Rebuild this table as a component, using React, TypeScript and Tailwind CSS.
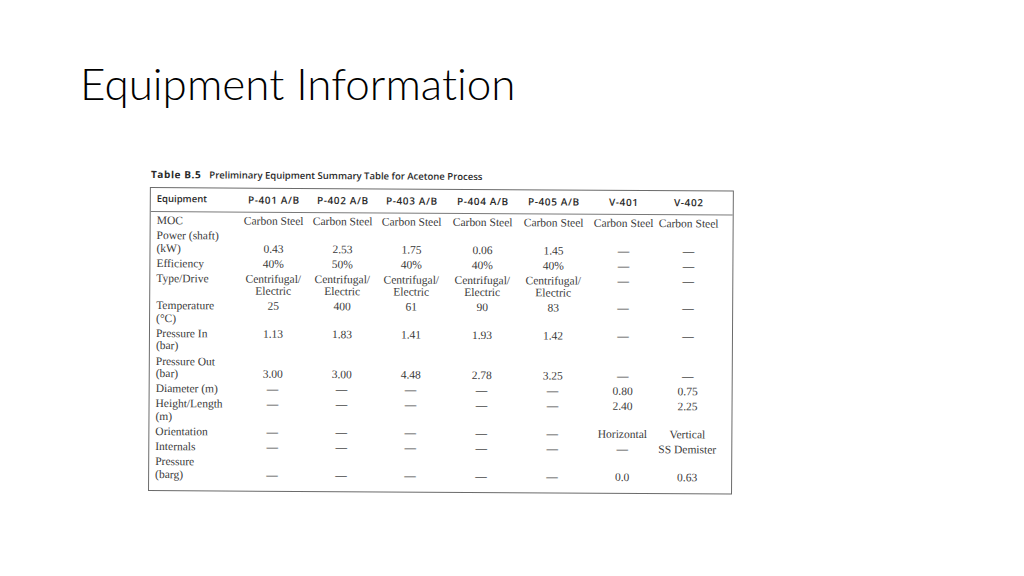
const columns = ['P-401 A/B', 'P-402 A/B', 'P-403 A/B', 'P-404 A/B', 'P-405 A/B', 'V-401', 'V-402'];

const D = '—';

type Row = {
  label: string[];
  values: string[][];
  align?: 'top' | 'bottom';
};

const cs = ['Centrifugal/', 'Electric'];

const rows: Row[] = [
  { label: ['MOC'], values: Array(7).fill(['Carbon Steel']) },
  {
    label: ['Power (shaft)', '(kW)'],
    values: [['0.43'], ['2.53'], ['1.75'], ['0.06'], ['1.45'], [D], [D]],
    align: 'bottom',
  },
  { label: ['Efficiency'], values: [['40%'], ['50%'], ['40%'], ['40%'], ['40%'], [D], [D]] },
  { label: ['Type/Drive'], values: [cs, cs, cs, cs, cs, [D], [D]], align: 'top' },
  {
    label: ['Temperature', '(°C)'],
    values: [['25'], ['400'], ['61'], ['90'], ['83'], [D], [D]],
    align: 'top',
  },
  {
    label: ['Pressure In', '(bar)'],
    values: [['1.13'], ['1.83'], ['1.41'], ['1.93'], ['1.42'], [D], [D]],
    align: 'top',
  },
  {
    label: ['Pressure Out', '(bar)'],
    values: [['3.00'], ['3.00'], ['4.48'], ['2.78'], ['3.25'], [D], [D]],
    align: 'bottom',
  },
  { label: ['Diameter (m)'], values: [[D], [D], [D], [D], [D], ['0.80'], ['0.75']] },
  {
    label: ['Height/Length', '(m)'],
    values: [[D], [D], [D], [D], [D], ['2.40'], ['2.25']],
    align: 'top',
  },
  { label: ['Orientation'], values: [[D], [D], [D], [D], [D], ['Horizontal'], ['Vertical']] },
  { label: ['Internals'], values: [[D], [D], [D], [D], [D], [D], ['SS Demister']] },
  {
    label: ['Pressure', '(barg)'],
    values: [[D], [D], [D], [D], [D], ['0.0'], ['0.63']],
    align: 'bottom',
  },
];

function Cell({ lines, align }: { lines: string[]; align?: 'top' | 'bottom' }) {
  return (
    <div className={`flex flex-col items-center text-center ${align === 'bottom' ? 'self-end' : 'self-start'}`}>
      {lines.map((l, i) => (
        <span key={i} className={l === D ? 'font-bold text-[#4a4a4a]' : ''}>
          {l}
        </span>
      ))}
    </div>
  );
}

function EquipmentTable() {
  return (
    <div className="ml-[70px] mt-[56px] w-[590px] origin-top-left rotate-[0.35deg]">
      <p className="pl-[1px] font-['Open_Sans',sans-serif] text-[9.5px] font-semibold leading-[14px] text-[#2a2a2a]">
        <span className="mr-[8px] text-[10px] font-bold tracking-[0.6px]">Table B.5</span>
        Preliminary Equipment Summary Table for Acetone Process
      </p>
      <div className="mt-[5px] w-[584px] border-[1.5px] border-[#6b6b6b] pb-[10px]">
        <div className="grid h-[24px] grid-cols-[88px_70px_68px_70px_72px_70px_70px_60px] items-center border-b-[1.5px] border-[#7a7a7a] font-['Open_Sans',sans-serif] text-[9.5px] font-semibold text-[#2a2a2a]">
          <span className="pl-[6px]">Equipment</span>
          {columns.map((c) => (
            <span key={c} className="text-center text-[10px] tracking-[0.6px]">
              {c}
            </span>
          ))}
        </div>
        <div className="flex flex-col gap-[2.6px] pt-[2px] font-['Liberation_Serif',serif] text-[11.5px] leading-[12.5px] text-[#3a3a3a]">
          {rows.map((r) => (
            <div key={r.label.join(' ')} className="grid grid-cols-[88px_70px_68px_70px_72px_70px_70px_60px]">
              <div className="flex flex-col pl-[6px]">
                {r.label.map((l) => (
                  <span key={l}>{l}</span>
                ))}
              </div>
              {r.values.map((v, i) => (
                <Cell key={i} lines={v} align={r.align} />
              ))}
            </div>
          ))}
        </div>
      </div>
    </div>
  );
}

export default function App() {
  return (
    <main className="h-[576px] w-[1024px] overflow-hidden bg-white pl-[80px] pt-[55px]">
      <h1 className="font-['Lato',sans-serif] text-[44px] font-light leading-[56px] text-black [font-variant-ligatures:none]">
        Equipment Information
      </h1>
      <EquipmentTable />
    </main>
  );
}
